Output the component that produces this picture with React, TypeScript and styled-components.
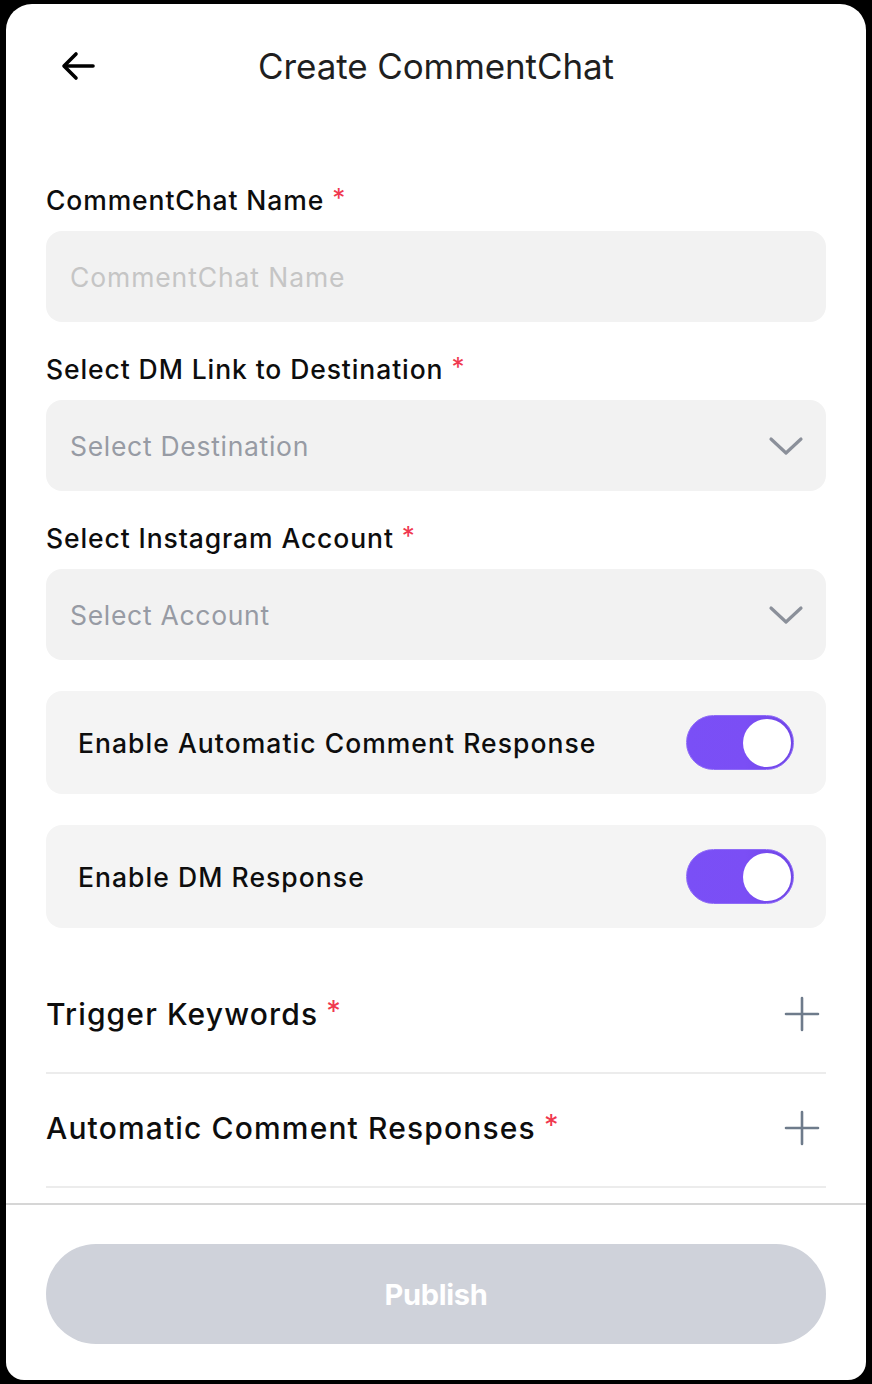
import React from "react";
import styled, { createGlobalStyle } from "styled-components";

const Global = createGlobalStyle`
  html, body { margin: 0; padding: 0; background: #000; }
  body { font-family: "Inter", "Liberation Sans", sans-serif; -webkit-font-smoothing: antialiased; }
  * { box-sizing: border-box; }
`;

const Screen = styled.div`
  width: 872px;
  height: 1384px;
  background: #000;
  padding: 4px 6px;
`;

const Panel = styled.div`
  width: 860px;
  height: 1376px;
  background: #fff;
  border-radius: 26px 26px 18px 18px;
  display: flex;
  flex-direction: column;
  overflow: hidden;
`;

const Header = styled.header`
  height: 124px;
  flex: 0 0 124px;
  display: flex;
  align-items: center;
  position: relative;
  padding: 0 0 0 54px;
`;

const BackButton = styled.button`
  border: 0;
  background: transparent;
  padding: 0;
  width: 36px;
  height: 36px;
  display: flex;
  align-items: center;
  justify-content: center;
  cursor: pointer;
`;

const Title = styled.h1`
  position: absolute;
  left: 0;
  right: 0;
  top: 0;
  bottom: 0;
  margin: 0;
  display: flex;
  align-items: center;
  justify-content: center;
  font-size: 35px;
  font-weight: 400;
  color: #1f1f1f;
  pointer-events: none;
  letter-spacing: -0.1px;
`;

const Scroll = styled.div`
  flex: 1 1 auto;
  overflow: hidden;
  padding: 56px 40px 0;
  display: flex;
  flex-direction: column;
`;

const Field = styled.div`
  display: flex;
  flex-direction: column;
  gap: 15px;
  margin-bottom: 31px;
`;

const Label = styled.label`
  display: block;
  height: 32px;
  font-size: 26.5px;
  line-height: 32px;
  font-weight: 500;
  color: #0d0d0d;
  letter-spacing: 0.9px;
  white-space: nowrap;
`;

const Star = styled.span<{ $big?: boolean }>`
  position: relative;
  top: ${(p) => (p.$big ? "-4px" : "-3px")};
  color: #f0384f;
  font-size: ${(p) => (p.$big ? "29px" : "26px")};
  margin-left: 8px;
  font-weight: 400;
  letter-spacing: 0;
`;

const Input = styled.input`
  height: 91px;
  width: 100%;
  border: 0;
  outline: none;
  border-radius: 16px;
  background: #f2f2f2;
  padding: 0 24px;
  font-family: inherit;
  font-size: 26.5px;
  letter-spacing: 0.9px;
  color: #222;
  &::placeholder { color: #c5c5c5; }
`;

const SelectBox = styled.div`
  height: 91px;
  border-radius: 16px;
  background: #f2f2f2;
  padding: 0 22px 0 24px;
  display: flex;
  align-items: center;
  justify-content: space-between;
`;

const SelectText = styled.span`
  font-size: 26.5px;
  letter-spacing: 0.7px;
  color: #979ba4;
`;

const ToggleCard = styled.div`
  height: 103px;
  border-radius: 16px;
  background: #f4f4f4;
  padding: 0 32px 0 32px;
  display: flex;
  align-items: center;
  justify-content: space-between;
  margin-bottom: 31px;
`;

const ToggleLabel = styled.span`
  font-size: 26.5px;
  font-weight: 500;
  color: #0d0d0d;
  letter-spacing: 1.05px;
`;

const Switch = styled.div<{ $on: boolean }>`
  width: 108px;
  height: 55px;
  border-radius: 28px;
  background: linear-gradient(90deg, #7a4ff6 0%, #7b4ef5 55%, #6f45e6 100%);
  border: 1.5px solid #8f6cf7;
  display: flex;
  align-items: center;
  justify-content: ${(p) => (p.$on ? "flex-end" : "flex-start")};
  padding: 0 2px;
`;

const Knob = styled.div`
  width: 48px;
  height: 48px;
  border-radius: 50%;
  background: #fff;
`;

const SectionList = styled.div`
  margin-top: 1px;
  display: flex;
  flex-direction: column;
`;

const Section = styled.div`
  height: 114px;
  border-bottom: 2px solid #ececec;
  display: flex;
  align-items: center;
  justify-content: space-between;
  padding-bottom: 4px;
`;

const SectionTitle = styled.span`
  font-size: 30px;
  line-height: 36px;
  font-weight: 500;
  color: #0d0d0d;
  letter-spacing: 1.15px;
  white-space: nowrap;
`;

const Footer = styled.footer`
  flex: 0 0 177px;
  border-top: 2px solid #d6d6d6;
  padding: 39px 40px 36px;
`;

const PublishButton = styled.button`
  width: 100%;
  height: 100px;
  border: 0;
  border-radius: 50px;
  background: #cfd2da;
  color: #fff;
  font-family: "Inter", "Liberation Sans", sans-serif;
  font-size: 29px;
  font-weight: 700;
  letter-spacing: -0.3px;
`;

const BackArrow = () => (
  <svg width="36" height="32" viewBox="0 0 36 32" fill="none">
    <path d="M33 16H5" stroke="#000" strokeWidth="3.6" strokeLinecap="round" />
    <path d="M16 4L4 16L16 28" stroke="#000" strokeWidth="3.6" strokeLinecap="round" strokeLinejoin="round" />
  </svg>
);

const Chevron = () => (
  <svg width="36" height="22" viewBox="0 0 36 22" fill="none">
    <path d="M3 4L18 18L33 4" stroke="#8b909a" strokeWidth="3.2" strokeLinecap="round" strokeLinejoin="round" />
  </svg>
);

const Plus = () => (
  <svg width="40" height="40" viewBox="0 0 40 40" fill="none" style={{ marginRight: 4 }}>
    <path d="M20 4V36M4 20H36" stroke="#6e7b8b" strokeWidth="2.6" strokeLinecap="round" />
  </svg>
);

export default function App() {
  return (
    <>
      <Global />
      <Screen>
        <Panel>
          <Header>
            <BackButton aria-label="Back">
              <BackArrow />
            </BackButton>
            <Title>Create CommentChat</Title>
          </Header>
          <Scroll>
            <Field>
              <Label>
                CommentChat Name<Star>*</Star>
              </Label>
              <Input placeholder="CommentChat Name" />
            </Field>
            <Field>
              <Label>
                Select DM Link to Destination<Star>*</Star>
              </Label>
              <SelectBox>
                <SelectText>Select Destination</SelectText>
                <Chevron />
              </SelectBox>
            </Field>
            <Field>
              <Label>
                Select Instagram Account<Star>*</Star>
              </Label>
              <SelectBox>
                <SelectText>Select Account</SelectText>
                <Chevron />
              </SelectBox>
            </Field>
            <ToggleCard>
              <ToggleLabel>Enable Automatic Comment Response</ToggleLabel>
              <Switch $on>
                <Knob />
              </Switch>
            </ToggleCard>
            <ToggleCard>
              <ToggleLabel>Enable DM Response</ToggleLabel>
              <Switch $on>
                <Knob />
              </Switch>
            </ToggleCard>
            <SectionList>
              <Section>
                <SectionTitle>
                  Trigger Keywords<Star $big>*</Star>
                </SectionTitle>
                <Plus />
              </Section>
              <Section>
                <SectionTitle>
                  Automatic Comment Responses<Star $big>*</Star>
                </SectionTitle>
                <Plus />
              </Section>
            </SectionList>
          </Scroll>
          <Footer>
            <PublishButton>Publish</PublishButton>
          </Footer>
        </Panel>
      </Screen>
    </>
  );
}
